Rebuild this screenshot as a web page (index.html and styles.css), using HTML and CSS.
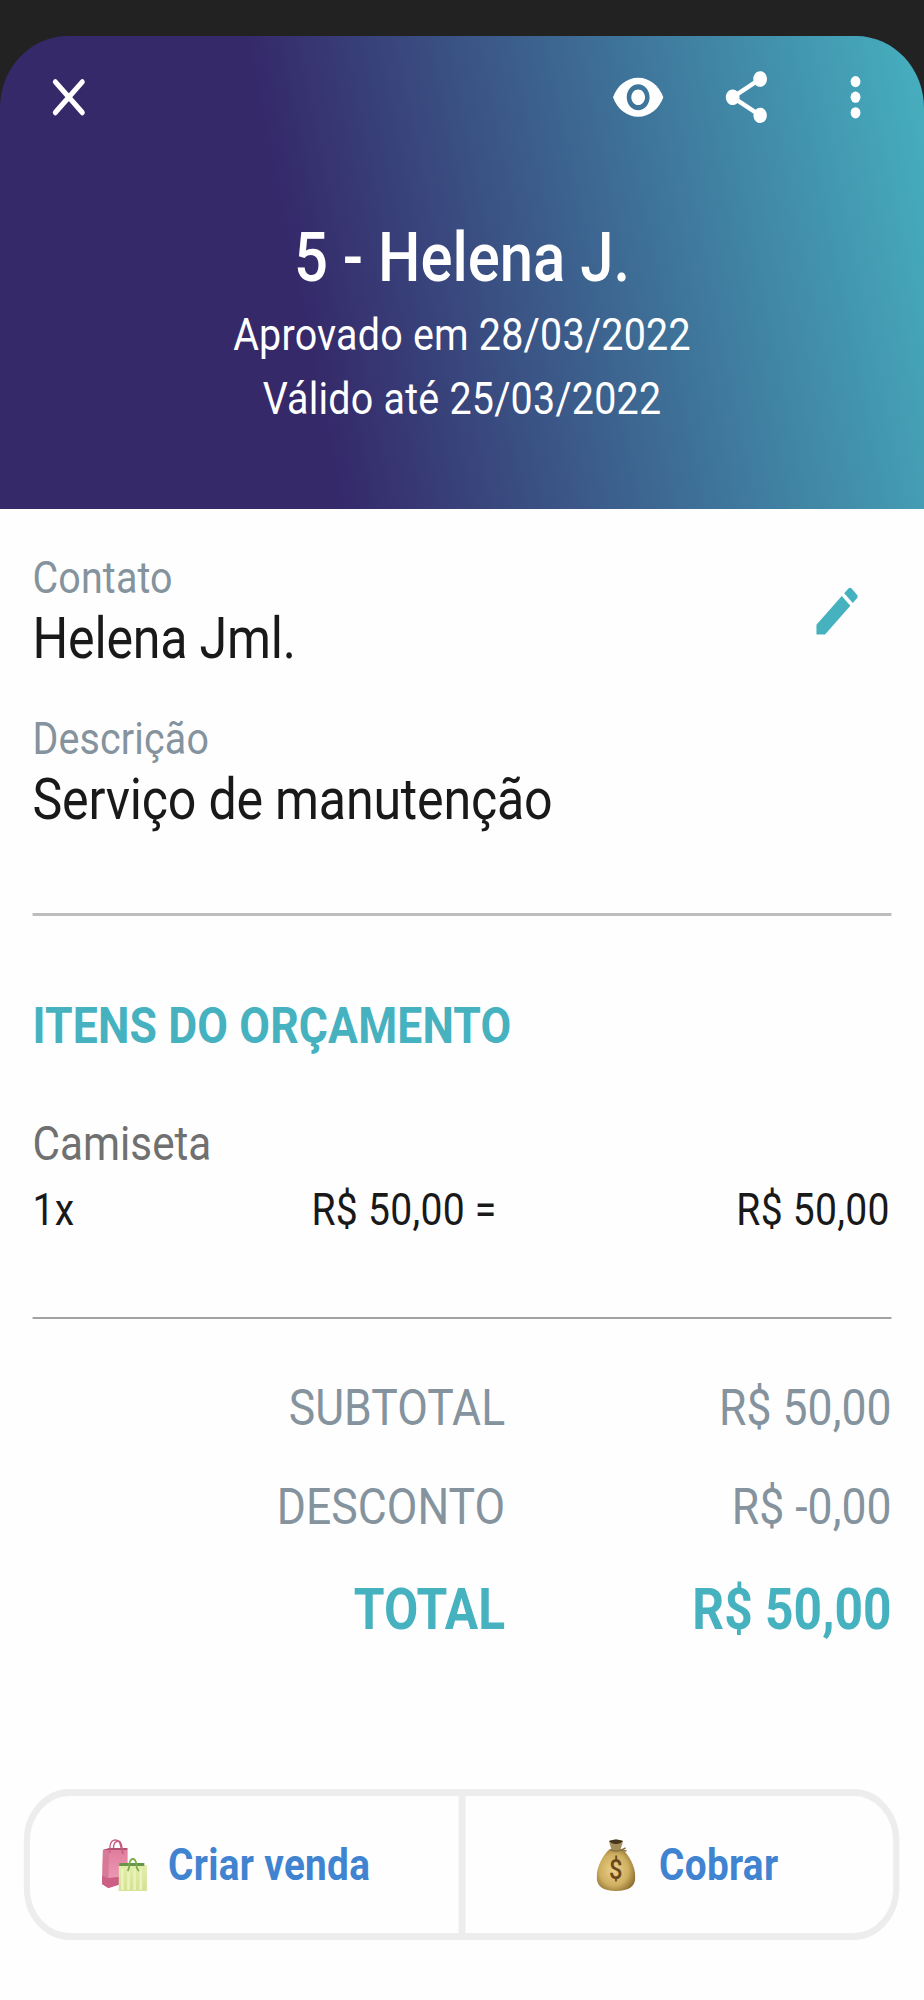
FILE: index.html
```html
<!DOCTYPE html>
<html lang="pt-BR">
<head>
<meta charset="utf-8">
<title>Orçamento</title>
<link rel="stylesheet" href="styles.css">
</head>
<body>
<div class="screen">
  <header class="hero">
    <nav class="toolbar">
      <svg class="icon icon-close" viewBox="0 0 24 24"><path d="M6.100 6.100l11.800 11.800M17.900 6.100l-11.800 11.800" fill="none" stroke="#fff" stroke-width="2.150" stroke-linecap="round"/></svg>
      <svg class="icon icon-eye" viewBox="0 0 24 24"><path fill="#fff" d="M12 4.500C7 4.500 2.730 7.610 1 12c1.730 4.390 6 7.500 11 7.500s9.270-3.110 11-7.500c-1.730-4.390-6-7.500-11-7.500zM12 17c-2.760 0-5-2.240-5-5s2.240-5 5-5 5 2.240 5 5-2.240 5-5 5zm0-8c-1.660 0-3 1.340-3 3s1.340 3 3 3 3-1.340 3-3-1.340-3-3-3z"/></svg>
      <svg class="icon icon-share" viewBox="0 0 24 24"><path fill="#fff" d="M18 16.080c-.76 0-1.440.3-1.960.77L8.910 12.700c.05-.23.09-.46.09-.7s-.04-.47-.09-.7l7.050-4.110c.54.5 1.250.81 2.040.81 1.660 0 3-1.340 3-3s-1.340-3-3-3-3 1.340-3 3c0 .24.04.47.09.7L8.040 9.810C7.500 9.310 6.790 9 6 9c-1.660 0-3 1.340-3 3s1.340 3 3 3c.79 0 1.500-.31 2.040-.81l7.120 4.160c-.05.21-.08.43-.08.65 0 1.610 1.310 2.920 2.920 2.920s2.920-1.310 2.920-2.920-1.310-2.920-2.920-2.920z"/></svg>
      <svg class="icon icon-more" viewBox="0 0 24 24"><g fill="#fff"><circle cx="12" cy="6" r="2.150"/><circle cx="12" cy="12" r="2.150"/><circle cx="12" cy="18" r="2.150"/></g></svg>
    </nav>
    <h1 class="title">5 - Helena J.</h1>
    <p class="date">Aprovado em 28/03/2022</p>
    <p class="date">Válido até 25/03/2022</p>
  </header>

  <main class="content">
    <section class="details">
      <div class="fields">
        <div><div class="label">Contato</div><div class="value">Helena Jml.</div></div>
        <div><div class="label">Descrição</div><div class="value">Serviço de manutenção</div></div>
      </div>
      <svg class="icon icon-edit" viewBox="0 0 24 24"><path fill="#46b1bf" d="M3 17.250V21h3.750L17.810 9.940l-3.750-3.750L3 17.250zM20.710 7.040c.39-.39.39-1.020 0-1.410l-2.340-2.340c-.39-.39-1.020-.39-1.410 0l-1.830 1.830 3.750 3.750 1.830-1.830z"/></svg>
    </section>
    <hr class="rule">
    <h2 class="heading">ITENS DO ORÇAMENTO</h2>
    <div class="product">Camiseta</div>
    <div class="line-item"><span>1x</span><span>R$ 50,00 =</span><span class="amount">R$ 50,00</span></div>
    <hr class="rule rule-dark">
    <div class="totals">
      <div class="sum"><span>SUBTOTAL</span><span>R$ 50,00</span></div>
      <div class="sum"><span>DESCONTO</span><span>R$ -0,00</span></div>
      <div class="sum grand"><span>TOTAL</span><span>R$ 50,00</span></div>
    </div>
  </main>

  <footer class="actions">
    <div class="action action-sale">
      <svg class="bags" viewBox="0 0 52 52">
        <defs>
          <linearGradient id="pink" x1="0" y1="0" x2="0" y2="1"><stop offset="0" stop-color="#e07c9c"/><stop offset="1" stop-color="#f0a0bc"/></linearGradient>
          <linearGradient id="lime" x1="0" y1="0" x2="0" y2="1"><stop offset="0" stop-color="#e3edaa"/><stop offset="1" stop-color="#d3e294"/></linearGradient>
        </defs>
        <path d="M2 11l7-1.500h21V43L9 49l-8-4z" fill="url(#pink)"/>
        <path d="M2 11l7-1.500L8 49l-7-4z" fill="#d77a97"/>
        <path d="M1 37l7 2 22-2v6L8 49l-7-4z" fill="#cc5f85"/>
        <path d="M2 11l7-2h21l-1 2z" fill="#b25272"/>
        <path d="M10 14V7q1-6 6-6t6 6l3 8M14 9q0-7 6-7 4 1 4 12" fill="none" stroke="#c95c7e" stroke-width="1.500"/>
        <path d="M20 26h32v26H20z" fill="url(#lime)"/>
        <path d="M24 30v21M31 30v21M38 30v21M45 30v21" stroke="#ebf2bd" stroke-width="3"/>
        <path d="M21 24h28v3H20z" fill="#68954c"/>
        <path d="M30 32q2-2 2-7 1-5 4-5t4 5q0 5 3 7" fill="none" stroke="#79ad4a" stroke-width="1.900"/>
      </svg>
      <span>Criar venda</span>
    </div>
    <div class="action action-charge">
      <svg class="money" viewBox="0 0 44 52">
        <defs><radialGradient id="gold" cx=".45" cy=".5" r=".62"><stop offset="0" stop-color="#ead38d"/><stop offset=".6" stop-color="#cfaf60"/><stop offset="1" stop-color="#84662b"/></radialGradient></defs>
        <path d="M15 10C8 15 0 27 0 38c0 9 7 14 22 14s22-5 22-14c0-11-8-23-15-28z" fill="url(#gold)"/>
        <path d="M14 2q8-3 16 0l-3 9H17z" fill="#a28d59"/>
        <path d="M14 2q8-3 16 0-3 3-8 3t-8-3z" fill="#44351e"/>
        <path d="M16 11q6 2 12 0l5-2M28 11l6 1" fill="none" stroke="#8a7547" stroke-width="1.700"/>
        <text x="22" y="40" text-anchor="middle" class="coin">$</text>
      </svg>
      <span>Cobrar</span>
    </div>
  </footer>
</div>
</body>
</html>
```
FILE: styles.css
```css
* { box-sizing: border-box; margin: 0; }
html, body { width: 924px; height: 2000px; overflow: hidden; }
body { background: #fefefe; font-family: Roboto, "Liberation Sans", sans-serif; }

/* Horizontally condensed canvas: 1050 * .88 = 924 */
.screen {
  width: 1050px;
  height: 2000px;
  padding-top: 36px;
  background: linear-gradient(#222 0 200px, #fefefe 200px);
  transform: scaleX(.88);
  transform-origin: 0 0;
  white-space: nowrap;
}

.hero {
  height: 472.500px;
  border-radius: 77px 77px 0 0 / 72px 72px 0 0;
  background: linear-gradient(77deg, #35296a 33.500%, #46b0c0 100%);
  color: #fff;
  text-align: center;
}
.toolbar { display: flex; align-items: center; padding: 30px 47px 0; height: 92.600px; }
.icon { width: 62.400px; height: 62.400px; flex: none; }
.icon-eye { margin-left: auto; }
.icon-share { margin-left: 61px; }
.icon-more { margin-left: 61px; }
.title { margin-top: 85.500px; font-size: 68px; line-height: 88px; font-weight: 500; }
.date { font-size: 44.800px; line-height: 64px; letter-spacing: .25px; }
.title + .date { margin-top: .500px; }

.content { padding: 40.500px 37px 0; }
.details { display: flex; justify-content: space-between; padding-right: 31px; height: 282px; }
.fields { display: grid; gap: 39px; align-content: start; }
.label { font-size: 44.800px; line-height: 58px; letter-spacing: .15px; color: #84939d; }
.value { font-size: 57px; line-height: 64px; letter-spacing: -.25px; color: #191919; }
.icon-edit { margin-top: 31px; }
.rule { border: 0; height: 2.500px; margin-top: 82px; background: #bdbdbd; }
.rule-dark { height: 2px; margin-top: 79px; background: #a2a2a2; }
.heading { margin-top: 80px; font-size: 50.600px; line-height: 60px; font-weight: 700; letter-spacing: .15px; color: #46b1bf; }
.product { margin-top: 58px; font-size: 48px; line-height: 60px; color: #707070; }
.line-item { display: grid; grid-template-columns: 317px 1fr auto; margin-top: 8px; padding-right: 2px; font-size: 44.400px; line-height: 56px; letter-spacing: .3px; color: #191919; }
.totals { display: grid; gap: 39px; margin-top: 59.500px; }
.sum { display: grid; grid-template-columns: 537px 1fr; text-align: right; font-size: 50.600px; line-height: 60px; color: #84939d; }
.grand { font-size: 56.500px; font-weight: 700; color: #46b1bf; margin-top: 4px; }

.actions {
  display: grid;
  grid-template-columns: 487px 1fr;
  width: 995px;
  height: 151px;
  margin: 149px 0 0 27px;
  border: 7px solid #ededed;
  border-radius: 52px;
}
.action { display: flex; align-items: center; font-size: 44px; font-weight: 700; letter-spacing: .35px; color: #4083d0; }
.action + .action { border-left: 8px solid #ededed; }
.action-sale { padding-left: 81px; gap: 24px; }
.action-charge { padding-left: 149px; gap: 27px; }
.bags { width: 52px; height: 52px; }
.money { width: 44px; height: 52px; }
.coin { font: 500 27px Roboto, sans-serif; fill: #6b481b; }
```
